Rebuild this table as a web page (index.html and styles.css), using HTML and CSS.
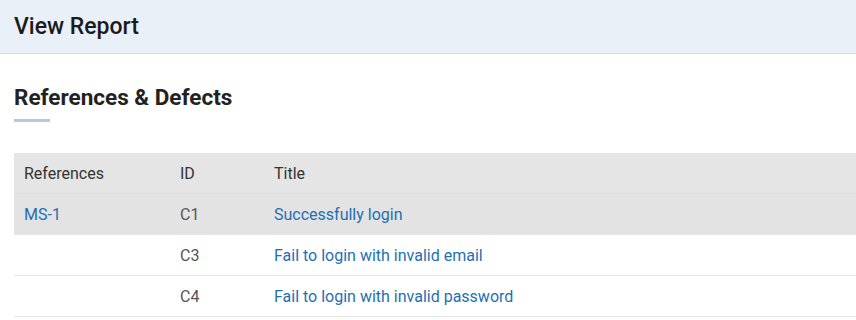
FILE: index.html
```html
<!DOCTYPE html>
<html lang="en">
<head>
  <meta charset="UTF-8" />
  <meta name="viewport" content="width=device-width, initial-scale=1.0"/>
  <title>View Report</title>
  <link rel="stylesheet" href="styles.css">
</head>
<body>
  <div class="page-header">
    <h1>View Report</h1>
  </div>

  <div class="content">
    <h2 class="section-title">References &amp; Defects</h2>

    <table class="ref-table">
      <thead>
        <tr>
          <th class="col-ref">References</th>
          <th class="col-id">ID</th>
          <th>Title</th>
        </tr>
      </thead>
      <tbody>
        <tr class="group-first">
          <td><a href="#">MS-1</a></td>
          <td>C1</td>
          <td><a href="#">Successfully login</a></td>
        </tr>
        <tr>
          <td></td>
          <td>C3</td>
          <td><a href="#">Fail to login with invalid email</a></td>
        </tr>
        <tr>
          <td></td>
          <td>C4</td>
          <td><a href="#">Fail to login with invalid password</a></td>
        </tr>
      </tbody>
    </table>
  </div>
</body>
</html>
```

FILE: styles.css
```css
body {
  font-family: Roboto, 'Liberation Sans', sans-serif;
  margin: 0;
  padding: 0;
  color: #333;
  background-color: #fff;
}
.page-header {
  background-color: #e9f0f8;
  border-bottom: 1px solid #d3dde8;
  height: 53px;
  padding: 0 14px;
  display: flex;
  align-items: center;
}
.page-header h1 {
  margin: 0;
  font-size: 23px;
  font-weight: 500;
  color: #1b1b1b;
}
.content {
  padding: 0 0 0 14px;
}
.section-title {
  margin: 30px 0 0;
  font-size: 22.5px;
  font-weight: 700;
  color: #222;
  line-height: 26px;
}
.section-title::after {
  content: "";
  display: block;
  width: 36px;
  height: 3px;
  background-color: #b4c9da;
  margin-top: 9px;
}
.ref-table {
  width: 100%;
  margin-top: 31px;
  border-collapse: collapse;
  font-size: 16px;
}
.ref-table th,
.ref-table td {
  text-align: left;
  font-weight: 400;
  padding: 0 10px;
  height: 40px;
  border-bottom: 1px solid #e6e6e6;
}
.ref-table thead th {
  background-color: #e5e5e5;
  color: #333;
  border-bottom: 1px solid #dedede;
}
.ref-table .col-ref {
  width: 136px;
}
.ref-table .col-id {
  width: 74px;
}
.ref-table td {
  color: #555;
}
.ref-table .group-first td {
  background-color: #e3e3e3;
}
.ref-table a {
  color: #1f6fb2;
  text-decoration: none;
}
```
